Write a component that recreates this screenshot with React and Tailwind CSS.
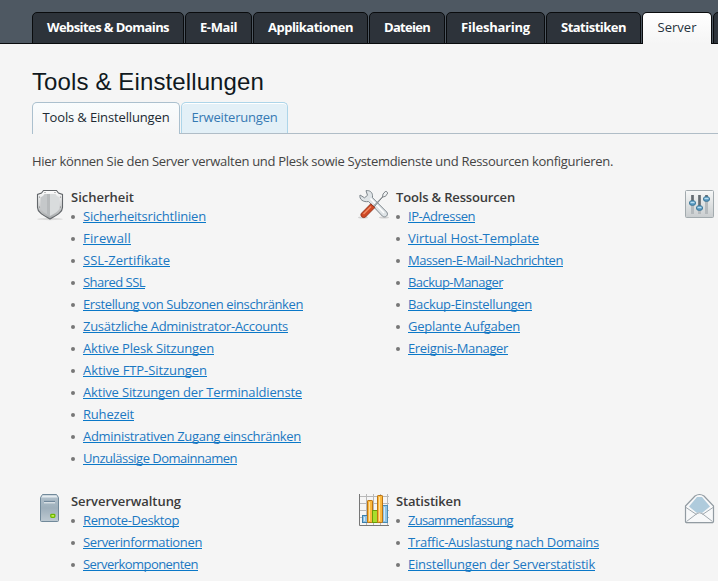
import React from 'react';

const tabs = [
  { label: 'Websites & Domains', box: 'w-[152px]', width: 122 },
  { label: 'E-Mail', box: 'w-[67px]', width: 37 },
  { label: 'Applikationen', box: 'w-[115px]', width: 85 },
  { label: 'Dateien', box: 'w-[76px]', width: 46 },
  { label: 'Filesharing', box: 'w-[99px]', width: 69 },
  { label: 'Statistiken', box: 'w-[95px]', width: 65 },
];

// Each link is [label, rendered width in px].
const security = [
  ['Sicherheitsrichtlinien', 123],
  ['Firewall', 48],
  ['SSL-Zertifikate', 87],
  ['Shared SSL', 62],
  ['Erstellung von Subzonen einschränken', 220],
  ['Zusätzliche Administrator-Accounts', 205],
  ['Aktive Plesk Sitzungen', 131],
  ['Aktive FTP-Sitzungen', 124],
  ['Aktive Sitzungen der Terminaldienste', 219],
  ['Ruhezeit', 51],
  ['Administrativen Zugang einschränken', 218],
  ['Unzulässige Domainnamen', 154],
];
const tools = [
  ['IP-Adressen', 67],
  ['Virtual Host-Template', 131],
  ['Massen-E-Mail-Nachrichten', 155],
  ['Backup-Manager', 95],
  ['Backup-Einstellungen', 124],
  ['Geplante Aufgaben', 112],
  ['Ereignis-Manager', 100],
];
const management = [
  ['Remote-Desktop', 96],
  ['Serverinformationen', 119],
  ['Serverkomponenten', 115],
];
const statistics = [
  ['Zusammenfassung', 105],
  ['Traffic-Auslastung nach Domains', 191],
  ['Einstellungen der Serverstatistik', 187],
];

// Spreads letters so that a label takes exactly the given width.
function Fit({ width, children }) {
  const ref = React.useRef(null);
  const [spacing, setSpacing] = React.useState(0);
  React.useLayoutEffect(() => {
    const natural = ref.current.getBoundingClientRect().width;
    setSpacing((width - natural) / children.length);
  }, []);
  return (
    <span ref={ref} className="inline-block whitespace-nowrap" style={{ letterSpacing: spacing }}>
      {children}
    </span>
  );
}

function Shield() {
  return (
    <svg width="30" height="32" viewBox="0 0 30 32">
      <defs>
        <linearGradient id="shieldRim" x2="0" y2="1"><stop stopColor="#fff" /><stop offset="1" stopColor="#a5a8aa" /></linearGradient>
      </defs>
      <ellipse cx="15" cy="30" rx="13" ry="1.2" fill="#dcdcdc" />
      <path d="M8.500 1.500h13l2 2.500 4 1.500v13c0 5-6.500 8-12.500 11.500C9 26.500 2.500 23.500 2.500 18.500v-13l4-1.500z" fill="url(#shieldRim)" stroke="#62666a" strokeWidth="1.1" />
      <path d="M15 5H9.500L8 7 5.500 8.500V18c0 4 4.500 6 9.500 9z" fill="#c5c8ca" />
      <path d="M15 5h5.500L22 7l2.500 1.500V18c0 4-4.500 6-9.500 9z" fill="#d9dcdd" />
      <path d="M12 5h3v22l-3-2z" fill="#b7babc" />
      <g fill="#777"><circle cx="10" cy="3.500" r=".6" /><circle cx="20" cy="3.500" r=".6" /><circle cx="4.500" cy="8" r=".6" /><circle cx="25.500" cy="8" r=".6" /><circle cx="4.500" cy="18" r=".6" /><circle cx="25.500" cy="18" r=".6" /></g>
    </svg>
  );
}

function Wrench() {
  return (
    <svg width="32" height="32" viewBox="0 0 32 32">
      <ellipse cx="5" cy="28.500" rx="5" ry="1" fill="#d2d2d2" /><ellipse cx="26" cy="28.500" rx="5" ry="1" fill="#d2d2d2" />
      <path d="M2 6l4.500 2.800 3-2.500L8 1.700c3.500-.7 6.500 1.500 6.500 5v2L28.700 23c2.300 2.800-1.200 6.500-4.200 4.200L10.500 12.500C5.500 13.500 1 10.500 2 6z" fill="#dfe4e7" stroke="#7d868c" />
      <path d="M12.500 9.500L26 24" stroke="#fff" strokeWidth="1.500" />
      <path d="M15 17.500L24.500 8l.5-3L27.800 2l2 2-2.300 3.300-3 .8-8.500 10z" fill="#f0f2f3" stroke="#73797e" strokeWidth=".9" />
      <path d="M12.800 14.800l4 3.800L7.500 28c-2.500 2-6-1.300-4-3.800z" fill="#cf4824" stroke="#8e2e16" strokeWidth=".9" />
      <path d="M13 17.500L5.500 25" stroke="#f28b65" strokeWidth="1.400" />
    </svg>
  );
}

function Sliders() {
  return (
    <svg width="32" height="32" viewBox="0 0 32 32">
      <defs><linearGradient id="panel" x2="0" y2="1"><stop stopColor="#f7f8f8" /><stop offset="1" stopColor="#c9cdcf" /></linearGradient></defs>
      <rect x="1.500" y="2.500" width="28" height="27" rx="1" fill="url(#panel)" stroke="#a2aaae" />
      <path d="M8.500 7v19M15.500 7v19M22.500 7v19" stroke="#b5babd" strokeWidth="3" />
      <path d="M8.500 7v7M15.500 7v12M22.500 7v3" stroke="#656c71" strokeWidth="2.500" />
      <g fill="#5596bf" stroke="#397292" strokeWidth=".8"><ellipse cx="8.500" cy="15" rx="3.200" ry="2.500" /><ellipse cx="15.500" cy="20" rx="3.200" ry="2.500" /><ellipse cx="22.500" cy="11" rx="3.200" ry="2.500" /></g>
      <path d="M6.500 14.500h4M13.500 19.500h4M20.500 10.500h4" stroke="#b8def2" strokeWidth="1.300" />
    </svg>
  );
}

function Computer() {
  return (
    <svg className="-mt-px" width="30" height="32" viewBox="0 0 30 32">
      <defs><linearGradient id="caseFill" x2="0" y2="1"><stop stopColor="#b4c3ce" /><stop offset=".5" stopColor="#9eafbb" /><stop offset="1" stopColor="#becad2" /></linearGradient></defs>
      <path d="M7.500 2.500h14l2 3v23a1 1 0 0 1-1 1h-16a1 1 0 0 1-1-1v-23z" fill="url(#caseFill)" stroke="#71899a" />
      <path d="M7.500 3.500h14l1 2h-16z" fill="#e5ecf0" />
      <path d="M9 9.500h11" stroke="#70879a" strokeWidth="1.300" /><path d="M9 10.800h11" stroke="#eef3f6" />
      <rect x="15.800" y="22.300" width="4" height="3" rx=".8" fill="#c5ec52" stroke="#6cb800" strokeWidth="1.300" />
    </svg>
  );
}

function Chart() {
  return (
    <svg width="32" height="34" viewBox="0 0 32 34">
      <path d="M2 3.500h29M2 10.500h29M2 17.500h29M2 24.500h29M8.500 1v31M15.500 1v31M22.500 1v31M29.500 1v31" stroke="#b8b8b8" />
      <path d="M1.500 1v31.500H31" fill="none" stroke="#777" />
      <rect x="4.500" y="22.500" width="5" height="7" fill="#8fc1e3" stroke="#3c7eaa" />
      <rect x="24.500" y="12.500" width="5" height="17" fill="#91c4e5" stroke="#4a8bb4" />
      <rect x="9.500" y="7.500" width="5" height="22" rx=".6" fill="#fbb93f" stroke="#bd7512" />
      <rect x="14.500" y="17.500" width="5" height="12" fill="#a9dd2b" stroke="#699c0a" />
      <rect x="19.500" y="2.500" width="5" height="27" rx=".6" fill="#fbb93f" stroke="#bd7512" />
      <path d="M11.500 9v19M21.500 4v24" stroke="#ffe0a0" /><path d="M6.500 24v4M26.500 14v14" stroke="#d2eaf8" />
    </svg>
  );
}

function Envelope() {
  return (
    <svg width="32" height="33" viewBox="0 0 32 33">
      <path d="M1.500 14L11 4q4.500-3 9 0l9.500 10v15.500q0 1-1 1h-26q-1 0-1-1z" fill="#f7f8f9" stroke="#929ba2" strokeWidth="1.200" />
      <path d="M5 14.500L13 5h5l8 9.500-8 6.500q-2.500-1.500-5 0z" fill="#afcbdc" />
      <path d="M2 15.500l10.500 7M29 15.500l-10.500 7M2.500 29.500l10.500-8q2.500-1.500 5 0l10.500 8" fill="none" stroke="#a1a9af" />
      <path d="M2 31.500h27" stroke="#d9dbdc" />
    </svg>
  );
}

function Section({ icon, iconBox, title, titleWidth, links }) {
  return (
    <section className="flex">
      <div className={`shrink-0 pt-px ${iconBox}`}>{icon}</div>
      <div>
        <h2 className="h-[18px] text-[13px] leading-[18px] font-semibold text-[#3b3b3b]">
          <Fit width={titleWidth}>{title}</Fit>
        </h2>
        <ul>
          {links.map(([label, width]) => (
            <li key={label} className="flex h-[22px] items-start">
              <span className="mt-[9px] mr-[8px] size-1 shrink-0 rounded-full bg-[#777]" />
              <a href="#" className="h-[17px] border-b border-[#0a78c8] leading-[20px] text-[#1c78c2]">
                <Fit width={width}>{label}</Fit>
              </a>
            </li>
          ))}
        </ul>
      </div>
    </section>
  );
}

export default function App() {
  return (
    <div className="h-[581px] w-[718px] overflow-hidden bg-[#f5f5f5] font-['Open_Sans','Noto_Sans',sans-serif] text-[13px] text-[#444]">
      <nav className="flex h-11 gap-px overflow-hidden bg-[#4e5862] pt-3 pl-8 shadow-[inset_0_-1px_0_#090b0d]">
        {tabs.map((tab) => (
          <a key={tab.label} href="#" className={`flex h-8 shrink-0 justify-center rounded-t-[5px] border border-[#090b0d] bg-[#2d333a] leading-[29px] font-bold text-white ${tab.box}`}>
            <Fit width={tab.width}>{tab.label}</Fit>
          </a>
        ))}
        <a href="#" className="flex h-8 w-[70px] shrink-0 justify-center rounded-t-[5px] border border-b-0 border-[#090b0d] bg-linear-to-b from-white to-[#f5f5f5] leading-[29px] text-[#27323c]">
          <Fit width={39}>Server</Fit>
        </a>
        <span className="h-8 w-20 shrink-0 rounded-t-[5px] border border-[#090b0d] bg-[#2d333a]" />
      </nav>
      <h1 className="mt-[22px] ml-8 h-9 font-['Liberation_Sans',Arial,sans-serif] text-[24px] leading-[32px] text-[#101820]">
        <Fit width={232}>Tools & Einstellungen</Fit>
      </h1>
      <div className="ml-8 flex h-8 gap-px shadow-[inset_0_-1px_0_#b0bdc7]">
        <a href="#" className="flex h-8 w-[148px] justify-center rounded-t-[5px] border border-b-0 border-[#abc0ce] bg-linear-to-b from-[#f9fcfd] to-[#f5f5f5] leading-[29px] text-[#202a33]">
          <Fit width={127}>Tools & Einstellungen</Fit>
        </a>
        <a href="#" className="flex h-[31px] w-[107px] justify-center rounded-t-[5px] border border-b-0 border-[#add5e9] bg-[#e3f0f7] leading-[29px] text-[#3579b3] shadow-[inset_0_1px_0_#fff]">
          <Fit width={86}>Erweiterungen</Fit>
        </a>
      </div>
      <p className="mt-[17px] ml-8 h-[36px] leading-[20px]">
        <Fit width={581}>Hier können Sie den Server verwalten und Plesk sowie Systemdienste und Ressourcen konfigurieren.</Fit>
      </p>
      <main className="grid grid-cols-[323px_326px_40px] grid-rows-[304px_100px] pt-px pl-[35px]">
        <Section iconBox="w-[36px]" icon={<Shield />} title="Sicherheit" titleWidth={63} links={security} />
        <Section iconBox="w-[38px]" icon={<Wrench />} title="Tools & Ressourcen" titleWidth={119} links={tools} />
        <Sliders />
        <Section iconBox="w-[36px]" icon={<Computer />} title="Serververwaltung" titleWidth={110} links={management} />
        <Section iconBox="w-[38px]" icon={<Chart />} title="Statistiken" titleWidth={65} links={statistics} />
        <Envelope />
      </main>
    </div>
  );
}
